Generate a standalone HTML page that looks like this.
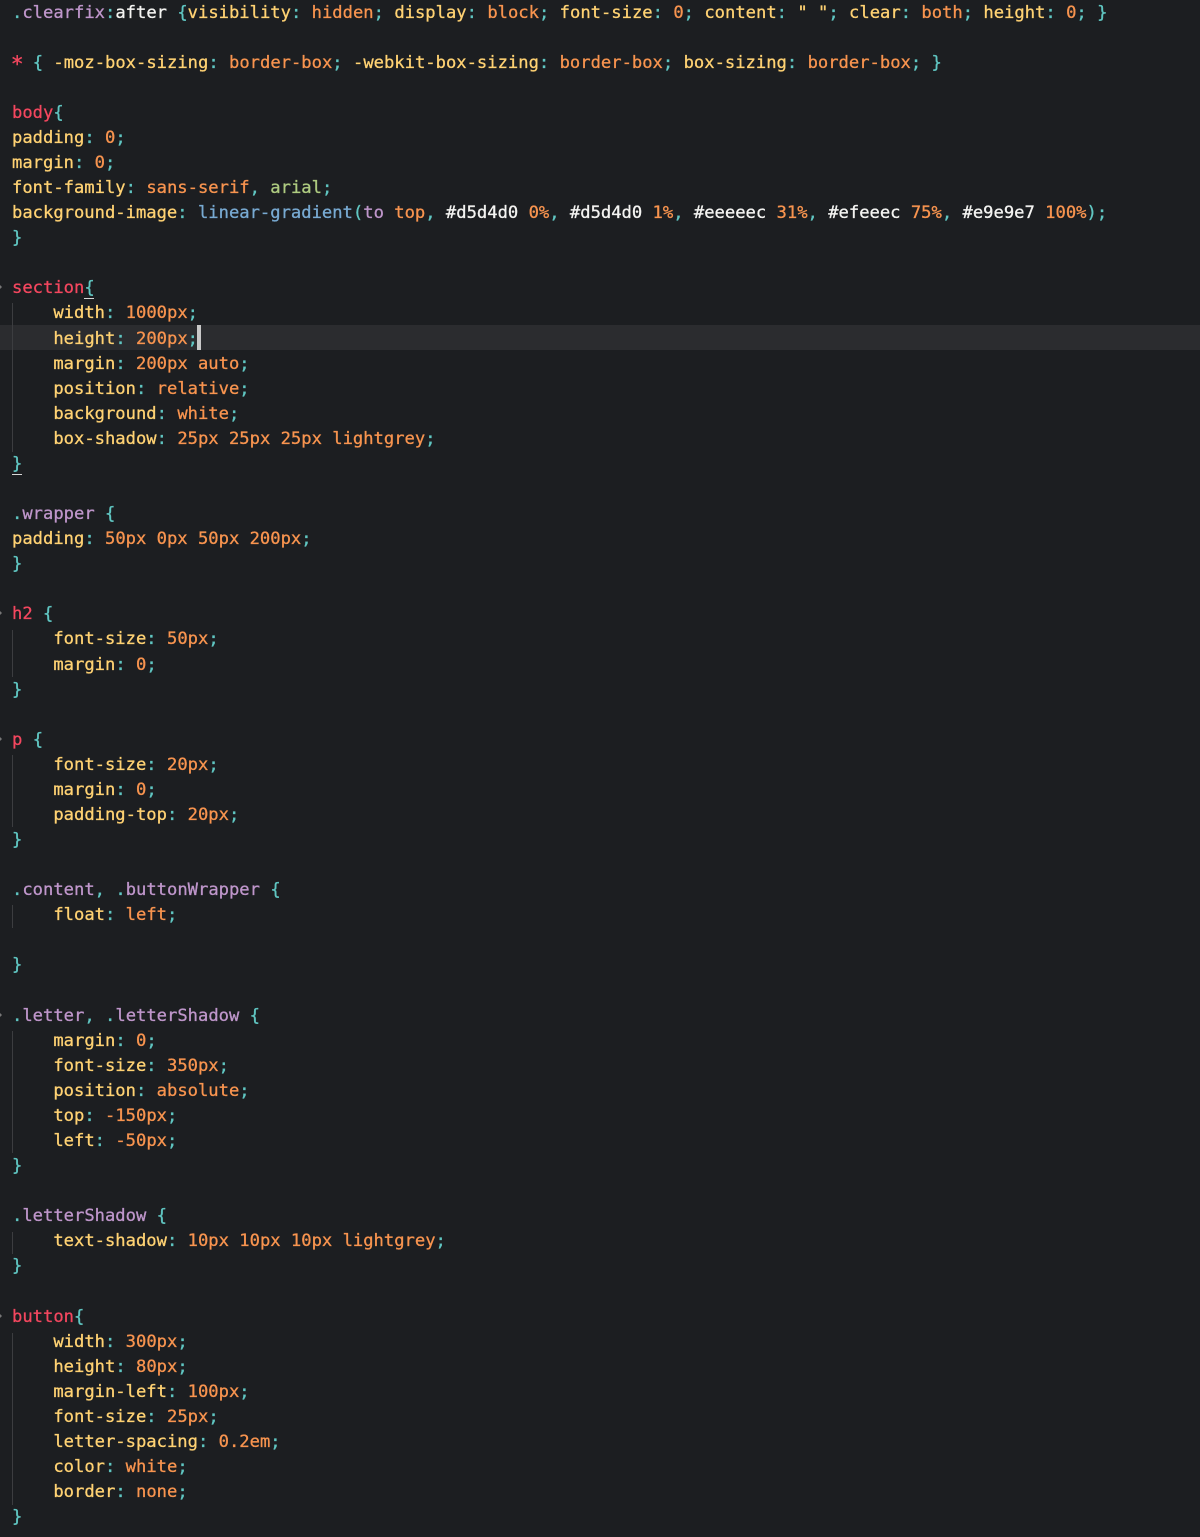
<!DOCTYPE html>
<html><head><meta charset="utf-8"><title>CSS</title>
<style>
html,body{margin:0;padding:0;background:#1c1e21;}
body{width:1200px;height:1537px;overflow:hidden;position:relative;}
pre{position:absolute;left:12px;top:0.5px;margin:0;font-family:"DejaVu Sans Mono","Liberation Mono",monospace;font-size:17.16px;line-height:25.083px;color:#f4f4f2;z-index:2;-webkit-text-stroke:0.3px currentColor;}
.r{color:#f4475f}.y{color:#ffd273}.o{color:#f8944f}.t{color:#60c6c2}.c{color:#bf96cb}.b{color:#78aad2}.g{color:#aecb80}
.s{display:inline-block;transform:translateY(2px) scale(1.25);transform-origin:50% 55%;}
.a{position:absolute;}
.h{left:0;top:325px;width:1200px;height:25px;background:#2b2c2f;z-index:1}
.cur{left:197px;top:325px;width:4px;height:25px;background:#c8c8c8;z-index:3}
.l{left:12px;width:1px;background:#3c3d40;z-index:1}
.u{height:1px;width:10px;background:#d8d8d8;z-index:3}
.f{left:0;width:0;height:0;border-top:2px solid transparent;border-bottom:2px solid transparent;border-left:2px solid #777;z-index:3}
</style></head><body>
<div class="a h"></div><div class="a cur"></div>
<div class="a l" style="top:303px;height:149px"></div>
<div class="a l" style="top:630px;height:47px"></div>
<div class="a l" style="top:755px;height:72px"></div>
<div class="a l" style="top:905px;height:23px"></div>
<div class="a l" style="top:1031px;height:122px"></div>
<div class="a l" style="top:1232px;height:22px"></div>
<div class="a l" style="top:1333px;height:172px"></div>
<div class="a u" style="left:84px;top:298px"></div>
<div class="a u" style="left:12px;top:474px"></div>
<div class="a f" style="top:285px"></div>
<div class="a f" style="top:611px"></div>
<div class="a f" style="top:737px"></div>
<div class="a f" style="top:1013px"></div>
<div class="a f" style="top:1314px"></div>
<pre><span class="t">.</span><span class="c">clearfix</span><span class="t">:</span>after <span class="t">{</span><span class="y">visibility</span><span class="t">:</span> <span class="o">hidden</span><span class="t">;</span> <span class="y">display</span><span class="t">:</span> <span class="o">block</span><span class="t">;</span> <span class="y">font-size</span><span class="t">:</span> <span class="o">0</span><span class="t">;</span> <span class="y">content</span><span class="t">:</span> <span class="y">" "</span><span class="t">;</span> <span class="y">clear</span><span class="t">:</span> <span class="o">both</span><span class="t">;</span> <span class="y">height</span><span class="t">:</span> <span class="o">0</span><span class="t">;</span> <span class="t">}</span>

<span class="r s">*</span> <span class="t">{</span> <span class="y">-moz-box-sizing</span><span class="t">:</span> <span class="o">border-box</span><span class="t">;</span> <span class="y">-webkit-box-sizing</span><span class="t">:</span> <span class="o">border-box</span><span class="t">;</span> <span class="y">box-sizing</span><span class="t">:</span> <span class="o">border-box</span><span class="t">;</span> <span class="t">}</span>

<span class="r">body</span><span class="t">{</span>
<span class="y">padding</span><span class="t">:</span> <span class="o">0</span><span class="t">;</span>
<span class="y">margin</span><span class="t">:</span> <span class="o">0</span><span class="t">;</span>
<span class="y">font-family</span><span class="t">:</span> <span class="o">sans-serif</span><span class="t">,</span> <span class="g">arial</span><span class="t">;</span>
<span class="y">background-image</span><span class="t">:</span> <span class="b">linear-gradient</span><span class="t">(</span><span class="c">to</span> <span class="o">top</span><span class="t">,</span> #d5d4d0 <span class="o">0%</span><span class="t">,</span> #d5d4d0 <span class="o">1%</span><span class="t">,</span> #eeeeec <span class="o">31%</span><span class="t">,</span> #efeeec <span class="o">75%</span><span class="t">,</span> #e9e9e7 <span class="o">100%</span><span class="t">);</span>
<span class="t">}</span>

<span class="r">section</span><span class="t">{</span>
    <span class="y">width</span><span class="t">:</span> <span class="o">1000px</span><span class="t">;</span>
    <span class="y">height</span><span class="t">:</span> <span class="o">200px</span><span class="t">;</span>
    <span class="y">margin</span><span class="t">:</span> <span class="o">200px auto</span><span class="t">;</span>
    <span class="y">position</span><span class="t">:</span> <span class="o">relative</span><span class="t">;</span>
    <span class="y">background</span><span class="t">:</span> <span class="o">white</span><span class="t">;</span>
    <span class="y">box-shadow</span><span class="t">:</span> <span class="o">25px 25px 25px lightgrey</span><span class="t">;</span>
<span class="t">}</span>

<span class="t">.</span><span class="c">wrapper</span> <span class="t">{</span>
<span class="y">padding</span><span class="t">:</span> <span class="o">50px 0px 50px 200px</span><span class="t">;</span>
<span class="t">}</span>

<span class="r">h2</span> <span class="t">{</span>
    <span class="y">font-size</span><span class="t">:</span> <span class="o">50px</span><span class="t">;</span>
    <span class="y">margin</span><span class="t">:</span> <span class="o">0</span><span class="t">;</span>
<span class="t">}</span>

<span class="r">p</span> <span class="t">{</span>
    <span class="y">font-size</span><span class="t">:</span> <span class="o">20px</span><span class="t">;</span>
    <span class="y">margin</span><span class="t">:</span> <span class="o">0</span><span class="t">;</span>
    <span class="y">padding-top</span><span class="t">:</span> <span class="o">20px</span><span class="t">;</span>
<span class="t">}</span>

<span class="t">.</span><span class="c">content</span><span class="t">,</span> <span class="t">.</span><span class="c">buttonWrapper</span> <span class="t">{</span>
    <span class="y">float</span><span class="t">:</span> <span class="o">left</span><span class="t">;</span>

<span class="t">}</span>

<span class="t">.</span><span class="c">letter</span><span class="t">,</span> <span class="t">.</span><span class="c">letterShadow</span> <span class="t">{</span>
    <span class="y">margin</span><span class="t">:</span> <span class="o">0</span><span class="t">;</span>
    <span class="y">font-size</span><span class="t">:</span> <span class="o">350px</span><span class="t">;</span>
    <span class="y">position</span><span class="t">:</span> <span class="o">absolute</span><span class="t">;</span>
    <span class="y">top</span><span class="t">:</span> <span class="o">-150px</span><span class="t">;</span>
    <span class="y">left</span><span class="t">:</span> <span class="o">-50px</span><span class="t">;</span>
<span class="t">}</span>

<span class="t">.</span><span class="c">letterShadow</span> <span class="t">{</span>
    <span class="y">text-shadow</span><span class="t">:</span> <span class="o">10px 10px 10px lightgrey</span><span class="t">;</span>
<span class="t">}</span>

<span class="r">button</span><span class="t">{</span>
    <span class="y">width</span><span class="t">:</span> <span class="o">300px</span><span class="t">;</span>
    <span class="y">height</span><span class="t">:</span> <span class="o">80px</span><span class="t">;</span>
    <span class="y">margin-left</span><span class="t">:</span> <span class="o">100px</span><span class="t">;</span>
    <span class="y">font-size</span><span class="t">:</span> <span class="o">25px</span><span class="t">;</span>
    <span class="y">letter-spacing</span><span class="t">:</span> <span class="o">0.2em</span><span class="t">;</span>
    <span class="y">color</span><span class="t">:</span> <span class="o">white</span><span class="t">;</span>
    <span class="y">border</span><span class="t">:</span> <span class="o">none</span><span class="t">;</span>
<span class="t">}</span></pre>
</body></html>
